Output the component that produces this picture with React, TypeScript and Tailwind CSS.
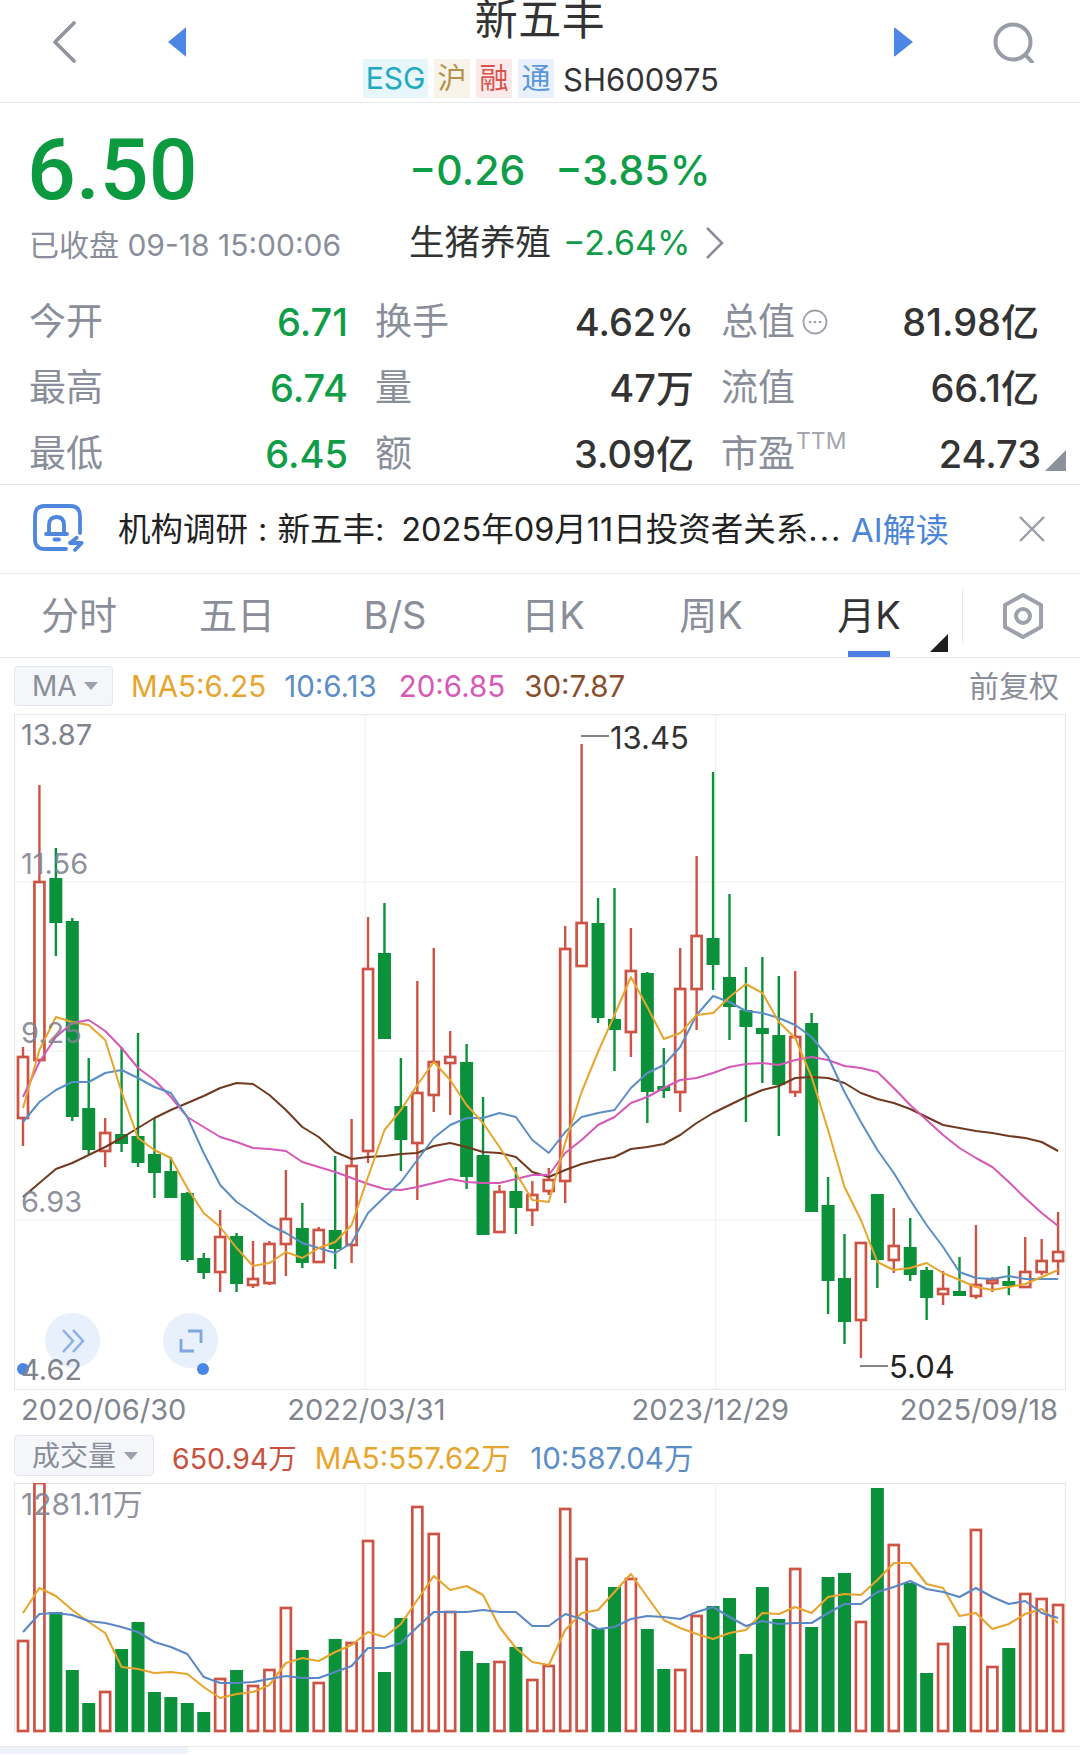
const FONT = "[font-family:Inter,'Noto_Sans_CJK_SC',sans-serif]";

type C = [number, number, number, number, 'r' | 'g'];
const candles: C[] = [
  [1047,1057,1118,1146,'r'],[785,882,1060,1062,'r'],[848,878,923,956,'g'],[918,921,1117,1121,'g'],
  [1058,1108,1150,1154,'g'],[1118,1133,1151,1167,'r'],[1047,1134,1144,1152,'g'],[1033,1136,1163,1167,'g'],
  [1118,1154,1173,1198,'g'],[1157,1171,1198,1198,'g'],[1192,1193,1260,1262,'g'],[1253,1258,1273,1279,'g'],
  [1210,1237,1272,1292,'r'],[1233,1236,1284,1292,'g'],[1241,1279,1285,1288,'r'],[1241,1244,1283,1285,'r'],
  [1170,1219,1244,1276,'r'],[1203,1228,1263,1268,'g'],[1227,1230,1262,1262,'r'],[1156,1230,1249,1269,'g'],
  [1119,1166,1245,1263,'r'],[917,969,1151,1163,'r'],[903,953,1039,1039,'g'],[1058,1106,1140,1171,'g'],
  [981,1093,1143,1200,'r'],[948,1062,1095,1112,'r'],[1031,1057,1063,1115,'r'],[1044,1062,1177,1189,'g'],
  [1097,1155,1235,1235,'g'],[1185,1192,1232,1232,'r'],[1167,1191,1208,1234,'g'],[1181,1195,1210,1226,'r'],
  [1168,1180,1191,1195,'r'],[926,949,1181,1203,'r'],[744,923,966,966,'r'],[898,923,1018,1023,'g'],
  [888,1019,1030,1071,'g'],[928,971,1032,1057,'r'],[972,973,1092,1123,'g'],[1048,1086,1091,1098,'g'],
  [948,989,1092,1112,'r'],[856,936,989,1030,'r'],[772,938,965,990,'g'],[894,977,1007,1040,'g'],
  [967,1010,1027,1122,'g'],[957,1028,1034,1083,'g'],[976,1035,1085,1136,'g'],[971,1037,1092,1097,'r'],
  [1013,1023,1212,1212,'g'],[1177,1205,1281,1314,'g'],[1234,1278,1322,1344,'g'],[1243,1243,1320,1358,'r'],
  [1194,1194,1260,1288,'g'],[1208,1246,1260,1273,'r'],[1218,1247,1275,1281,'g'],[1267,1270,1298,1320,'g'],
  [1271,1289,1294,1305,'r'],[1257,1291,1296,1296,'g'],[1225,1285,1296,1299,'r'],[1277,1280,1283,1292,'r'],
  [1266,1281,1286,1295,'g'],[1237,1272,1287,1287,'r'],[1239,1261,1272,1275,'r'],[1212,1252,1261,1275,'r'],
];
const ma5 = [1108,1050,1017,1022,1025,1040,1092,1138,1150,1158,1188,1213,1227,1248,1266,1263,1252,1258,1248,1242,1225,1177,1130,1110,1085,1062,1080,1105,1123,1147,1173,1200,1202,1143,1092,1052,1015,977,1007,1039,1033,1015,1013,997,984,993,1022,1038,1077,1130,1187,1220,1262,1270,1268,1263,1273,1280,1287,1290,1287,1284,1277,1270];
const ma10 = [1122,1102,1090,1082,1082,1073,1070,1078,1087,1093,1117,1153,1185,1202,1213,1225,1233,1243,1248,1253,1243,1213,1197,1182,1160,1138,1125,1118,1118,1113,1117,1140,1153,1132,1117,1113,1110,1088,1073,1065,1047,1015,996,1002,1011,1013,1018,1025,1037,1057,1092,1122,1150,1173,1200,1225,1247,1272,1278,1279,1276,1279,1279,1279];
const ma20 = [1097,1062,1037,1023,1020,1031,1048,1068,1080,1097,1117,1127,1137,1142,1148,1149,1151,1162,1167,1172,1178,1184,1189,1190,1187,1183,1179,1182,1183,1183,1179,1175,1175,1153,1140,1125,1117,1103,1097,1088,1080,1078,1073,1067,1064,1063,1065,1060,1057,1060,1066,1068,1072,1088,1105,1120,1135,1148,1158,1167,1182,1198,1213,1226];
const ma30 = [1197,1183,1169,1163,1155,1147,1138,1128,1118,1110,1103,1096,1088,1083,1084,1095,1110,1127,1137,1152,1159,1157,1156,1154,1153,1146,1143,1147,1152,1153,1157,1172,1177,1170,1164,1160,1157,1149,1147,1144,1135,1123,1113,1105,1097,1090,1086,1078,1077,1078,1083,1093,1099,1103,1109,1117,1125,1128,1131,1133,1136,1138,1142,1151];
const vol = [1641,1483,1612,1670,1703,1692,1649,1622,1692,1697,1703,1712,1679,1670,1686,1670,1608,1650,1683,1639,1643,1541,1672,1618,1507,1534,1612,1651,1663,1662,1647,1680,1666,1509,1559,1629,1587,1579,1629,1669,1670,1616,1606,1598,1654,1587,1619,1569,1627,1577,1573,1622,1488,1545,1583,1673,1644,1626,1530,1667,1648,1594,1599,1605];
const vma5 = [1613,1588,1596,1610,1622,1633,1667,1669,1673,1672,1674,1687,1698,1694,1692,1685,1663,1658,1661,1652,1645,1632,1637,1624,1600,1576,1590,1586,1595,1627,1648,1662,1665,1630,1613,1610,1592,1574,1597,1620,1628,1634,1639,1633,1630,1613,1614,1607,1613,1597,1594,1595,1580,1563,1563,1584,1588,1616,1613,1629,1624,1614,1609,1623];
const vma10 = [1632,1614,1613,1615,1621,1623,1627,1632,1642,1647,1654,1677,1683,1683,1682,1679,1676,1678,1678,1672,1666,1648,1648,1643,1627,1612,1612,1612,1610,1612,1612,1626,1626,1614,1619,1629,1627,1619,1616,1617,1619,1612,1607,1617,1626,1621,1624,1623,1623,1613,1604,1604,1592,1587,1581,1589,1592,1597,1588,1597,1604,1601,1613,1618];
const volColor: ('r' | 'g')[] = ['r','r','g','g','g','r','g','g','g','g','g','g','r','g','r','r','r','g','r','g','r','r','g','g','r','r','r','g','g','r','g','r','r','r','r','g','g','r','g','g','r','r','g','g','g','g','g','r','g','g','g','r','g','r','g','g','r','g','r','r','g','r','r','r'];

const X = (i: number) => 23 + 16.43 * i;
const RED = '#cd5344';
const GREEN = '#0b9139';
const line = (a: number[]) => a.map((y, i) => `${X(i).toFixed(1)},${y}`).join(' ');

function KChart() {
  return (
    <svg className="absolute inset-0" width="1052" height="676" viewBox="14 714 1052 676">
      <rect x="14.5" y="714.5" width="1051" height="675" fill="#fff" stroke="#e6e8ec" strokeWidth="1.2" />
      {[882, 1051, 1220].map((y) => <line key={y} x1="15" x2="1065" y1={y} y2={y} stroke="#eceef2" strokeWidth="1.2" />)}
      {[365, 715.6].map((x) => <line key={x} x1={x} x2={x} y1="715" y2="1389" stroke="#f0f1f5" strokeWidth="1.2" />)}
      {candles.map(([h, t, b, l, c], i) => {
        const x = X(i);
        const col = c === 'r' ? RED : GREEN;
        return (
          <g key={i}>
            <line x1={x} x2={x} y1={h} y2={t} stroke={col} strokeWidth="2.4" />
            <line x1={x} x2={x} y1={b} y2={l} stroke={col} strokeWidth="2.4" />
            {c === 'r' ? (
              <rect x={x - 5} y={t} width="10" height={Math.max(b - t, 2)} fill="#fff" stroke={col} strokeWidth="2.7" />
            ) : (
              <rect x={x - 6.5} y={t} width="13" height={Math.max(b - t, 3)} fill={col} />
            )}
          </g>
        );
      })}
      <polyline points={line(ma30)} fill="none" stroke="#6f3a20" strokeWidth="2" strokeLinejoin="round" />
      <polyline points={line(ma20)} fill="none" stroke="#d658b7" strokeWidth="2" strokeLinejoin="round" />
      <polyline points={line(ma10)} fill="none" stroke="#5b8ec6" strokeWidth="2" strokeLinejoin="round" />
      <polyline points={line(ma5)} fill="none" stroke="#e7a52e" strokeWidth="2" strokeLinejoin="round" />
      <line x1="581" x2="609" y1="736" y2="736" stroke="#333" strokeWidth="1.2" />
      <line x1="860" x2="888" y1="1366" y2="1366" stroke="#333" strokeWidth="1.2" />
    </svg>
  );
}

function VolChart() {
  return (
    <svg className="absolute inset-0" width="1052" height="250" viewBox="14 1483 1052 250">
      <path d="M14.5 1733 V1483.5 H1065.5 V1733" fill="#fff" stroke="#e6e8ec" strokeWidth="1.2" />
      {[365, 715.6].map((x) => <line key={x} x1={x} x2={x} y1="1484" y2="1732" stroke="#f0f1f5" strokeWidth="1.2" />)}
      {vol.map((y, i) => {
        const x = X(i);
        return volColor[i] === 'r' ? (
          <rect key={i} x={x - 5} y={y} width="10" height={1731 - y} fill="#fff" stroke={RED} strokeWidth="2.7" />
        ) : (
          <rect key={i} x={x - 6.5} y={y} width="13" height={1732.2 - y} fill={GREEN} />
        );
      })}
      <polyline points={line(vma5)} fill="none" stroke="#e7a52e" strokeWidth="2.1" strokeLinejoin="round" />
      <polyline points={line(vma10)} fill="none" stroke="#5b87c6" strokeWidth="2.1" strokeLinejoin="round" />
    </svg>
  );
}

function Stat({ label, value, vc, extra, w = 'w-[319px]' }: { label: string; value: string; vc: string; extra?: React.ReactNode; w?: string }) {
  return (
    <div className={`flex items-center justify-between ${w}`}>
      <div className="flex items-center text-[37px] leading-[44px] text-[#8a8e9a]">{label}{extra}</div>
      <div className={`text-[38px] leading-[44px] font-medium ${vc}`}>{value}</div>
    </div>
  );
}

export default function App() {
  return (
    <div className={`${FONT} relative h-[1755px] w-[1080px] overflow-hidden bg-white`}>
      {/* header */}
      <div className="flex h-[103px] items-start border-b border-[#e8e8e8] pr-[44px] pl-[52px]">
        <div className="mt-[21px] flex items-center gap-[91px]">
          <svg width="24" height="42" viewBox="0 0 24 42"><polyline points="22,2 3,21 22,40" fill="none" stroke="#8f939d" strokeWidth="3.6" strokeLinecap="round" strokeLinejoin="round" /></svg>
          <svg width="20" height="30" viewBox="0 0 20 30"><path d="M19 1 V29 Q19 30 17.500 28.500 L1 15 L17.500 1.500 Q19 0 19 1 Z" fill="#4e86e6" /></svg>
        </div>
        <div className="ml-[176px] flex w-[360px] flex-col">
          <div className="h-[59px] pr-[6px] text-center text-[43px] leading-[38px] tracking-[0.5px] text-[#333]">新五丰</div>
          <div className="flex h-[39px] items-center">
            <span className="flex h-[39px] w-[65px] items-center justify-center bg-[#e6f6fb] text-[30px] text-[#22a8c0]">ESG</span>
            <span className="ml-[6px] flex h-[39px] w-[36px] items-center justify-center bg-[#f8f3e9] text-[29px] text-[#b1924b]">沪</span>
            <span className="ml-[6px] flex h-[39px] w-[36px] items-center justify-center bg-[#fbeaea] text-[29px] text-[#d9534f]">融</span>
            <span className="ml-[6px] flex h-[39px] w-[36px] items-center justify-center bg-[#e9f1fc] text-[29px] text-[#5b95dc]">通</span>
            <span className="mt-[2px] ml-[9px] text-[31px] leading-[39px] text-[#333]">SH600975</span>
          </div>
        </div>
        <div className="mt-[21px] ml-auto flex items-center gap-[78px]">
          <svg width="21" height="30" viewBox="0 0 21 30"><path d="M1 1 V29 Q1 30 3 28.500 L20 15 L3 1.500 Q1 0 1 1 Z" fill="#4e86e6" /></svg>
          <svg width="44" height="42" viewBox="0 0 44 42" fill="none" stroke="#989ca6" strokeWidth="4"><circle cx="21" cy="21" r="17.500" /><path d="M33.500 34 L40 41" strokeLinecap="round" /></svg>
        </div>
      </div>

      {/* price */}
      <div className="flex h-[185px] pl-[29px]">
        <div className="w-[380px]">
          <div className="mt-[31px] -ml-[2px] h-[72px] [font-family:Roboto,sans-serif] text-[86px] leading-[72px] font-medium text-[#0c9a41]">6.50</div>
          <div className="mt-[24px] h-[30px] text-[30px] leading-[30px] text-[#8a8e9a]">已收盘 09-18 15:00:06</div>
        </div>
        <div>
          <div className="mt-[44px] flex h-[46px] gap-[30px] text-[41px] leading-[46px] font-medium text-[#0f9d48]">
            <span>−0.26</span><span>−3.85%</span>
          </div>
          <div className="mt-[30px] flex h-[40px] items-center leading-[40px]">
            <span className="text-[35.500px] text-[#333]">生猪养殖</span>
            <span className="ml-[12px] text-[34px] text-[#0f9d48]">−2.64%</span>
            <svg className="ml-[14px]" width="21" height="32" viewBox="0 0 21 32"><polyline points="3,1 18,16 3,31" fill="none" stroke="#8a8e9a" strokeWidth="2.600" /></svg>
          </div>
        </div>
      </div>

      {/* stats */}
      <div className="relative mb-[-2px] flex flex-col pt-[1px] pl-[29px] [&>div]:h-[66px]">
        <div className="flex items-center gap-[27px]">
          <Stat label="今开" value="6.71" vc="text-[#0f9d48]" />
          <Stat label="换手" value="4.62%" vc="text-[#333]" />
          <Stat label="总值" value="81.98亿" vc="text-[#333]" w="w-[318px]" extra={
            <svg className="ml-[7px]" width="26" height="26" viewBox="0 0 26 26"><circle cx="13" cy="13" r="11.500" fill="none" stroke="#9da1ab" strokeWidth="1.800" /><circle cx="8" cy="13" r="1.300" fill="#9da1ab" /><circle cx="13" cy="13" r="1.300" fill="#9da1ab" /><circle cx="18" cy="13" r="1.300" fill="#9da1ab" /></svg>
          } />
        </div>
        <div className="flex items-center gap-[27px]">
          <Stat label="最高" value="6.74" vc="text-[#0f9d48]" />
          <Stat label="量" value="47万" vc="text-[#333]" />
          <Stat label="流值" value="66.1亿" vc="text-[#333]" w="w-[318px]" />
        </div>
        <div className="-mb-[1px] flex items-center gap-[27px]">
          <Stat label="最低" value="6.45" vc="text-[#0f9d48]" />
          <Stat label="额" value="3.09亿" vc="text-[#333]" />
          <Stat label="市盈" value="24.73" vc="text-[#333]" w="w-[320px]" extra={
            <span className="mt-[-26px] ml-[1px] text-[23px] leading-[24px] text-[#a4a7b0]">TTM</span>
          } />
        </div>
        <svg className="absolute top-[162px] left-[1045px]" width="21" height="21" viewBox="0 0 21 21"><polygon points="21,0 21,21 0,21" fill="#8d919c" /></svg>
      </div>

      {/* banner */}
      <div className="flex h-[90px] items-center border-y border-[#e8e8e8] pl-[32px]">
        <svg width="54" height="52" viewBox="0 0 54 52" fill="none" stroke="#4f87de" strokeWidth="3.800" strokeLinecap="round" strokeLinejoin="round">
          <path d="M34 46 H13 Q3 46 3 36 V13 Q3 3 13 3 H38 Q48 3 48 13 V30" />
          <path d="M17 30 V22 Q17 14 24.500 14 Q32 14 32 22 V30" />
          <path d="M14 31 H35 M22.500 36.500 H27" />
          <path d="M44.700 34.700 L38 40 H49.700 L43 47" />
        </svg>
        <div className="mt-[2px] ml-[32px] w-[725px] text-[32.500px] leading-[40px] whitespace-nowrap text-[#222]">机构调研<span className="mx-[10px]">:</span>新五丰:<span className="ml-[17px]">2025年09月11日投资者关系</span><span className="tracking-[2px]">...</span></div>
        <div className="mt-[2px] ml-[8px] text-[33px] leading-[40px] whitespace-nowrap text-[#4a85d9]">AI解读</div>
        <svg className="ml-[70px]" width="26" height="26" viewBox="0 0 26 26"><path d="M1 1 L25 25 M25 1 L1 25" stroke="#9a9ea8" strokeWidth="2.400" /></svg>
      </div>

      {/* tabs */}
      <div className="flex h-[84px] items-start border-b border-[#e8e8e8]">
        <div className="grid h-[83px] w-[948px] grid-cols-6 text-[38px] text-[#8a8e9a]">
          {['分时', '五日', 'B/S', '日K', '周K'].map((t) => (
            <div key={t} className="flex items-center justify-center pb-[2px] leading-[80px]">{t}</div>
          ))}
          <div className="relative flex items-center justify-center pb-[2px] leading-[80px] text-[#333]">
            月K
            <div className="absolute bottom-0 left-[58px] h-[6px] w-[42px] bg-[#4a80e0]" />
            <svg className="absolute top-[60px] left-[140px]" width="18" height="18" viewBox="0 0 18 18"><polygon points="18,0 18,18 0,18" fill="#1f1f1f" /></svg>
          </div>
        </div>
        <div className="mt-[15px] ml-[14px] h-[54px] w-[1px] bg-[#e8e8e8]" />
        <svg className="mt-[19px] ml-[39px]" width="42" height="46" viewBox="0 0 42 46" fill="none" stroke="#9da1ab" strokeWidth="4">
          <polygon points="21,2 39,12 39,34 21,44 3,34 3,12" strokeLinejoin="round" />
          <circle cx="21" cy="23" r="7" />
        </svg>
      </div>

      {/* MA row */}
      <div className="flex h-[56px] items-center pr-[21px] pl-[14px] text-[29.500px]">
        <div className="flex h-[40px] w-[99px] items-center gap-[7px] rounded-[4px] border border-[#e4e6ee] bg-[#f5f6fa] pl-[17px] text-[28px] text-[#8a8e9a]">
          MA
          <svg width="14" height="8" viewBox="0 0 14 8"><polygon points="0,0 14,0 7,8" fill="#9da1ab" /></svg>
        </div>
        <span className="ml-[18px] text-[#e7a52e]">MA5:6.25</span>
        <span className="ml-[18px] text-[#5b8ec6]">10:6.13</span>
        <span className="ml-[22px] text-[#d658b7]">20:6.85</span>
        <span className="ml-[19px] text-[#8a4d2a]">30:7.87</span>
        <span className="ml-auto text-[30px] text-[#8a8e9a]">前复权</span>
      </div>

      {/* K chart */}
      <div className="relative mx-[14px] h-[675px]">
        <KChart />
        <span className="absolute top-[3px] left-[7px] text-[29px] leading-[36px] text-[#7f838e]">13.87</span>
        <span className="absolute top-[132px] left-[7px] text-[29px] leading-[36px] text-[#7f838e]/90">11.56</span>
        <span className="absolute top-[301px] left-[7px] text-[29px] leading-[36px] text-[#7f838e]/90">9.25</span>
        <span className="absolute top-[470px] left-[7px] text-[29px] leading-[36px] text-[#7f838e]/90">6.93</span>
        <span className="absolute top-[6px] left-[596px] text-[31px] leading-[36px] text-[#333]">13.45</span>
        <span className="absolute top-[635px] left-[875px] text-[31px] leading-[36px] text-[#222]">5.04</span>
        <div className="absolute top-[599px] left-[31px] flex h-[55px] w-[55px] items-center justify-center rounded-full bg-[#e8f0fb]">
          <svg width="26" height="24" viewBox="0 0 26 24" fill="none" stroke="#8fb0e6" strokeWidth="2.600"><polyline points="3,1 13,12 3,23" /><polyline points="13,1 23,12 13,23" /></svg>
        </div>
        <div className="absolute top-[599px] left-[149px] flex h-[55px] w-[55px] items-center justify-center rounded-full bg-[#e8f0fb]">
          <svg width="24" height="24" viewBox="0 0 24 24" fill="none" stroke="#7fa6e2" strokeWidth="2.800"><polyline points="9,2 22,2 22,14" /><polyline points="2,10 2,22 15,22" /></svg>
        </div>
        <div className="absolute top-[649px] left-[3px] h-[12px] w-[12px] rounded-full bg-[#4a86e8]" />
        <div className="absolute top-[649px] left-[183px] h-[12px] w-[12px] rounded-full bg-[#4a86e8]" />
        <span className="absolute top-[638px] left-[7px] text-[29px] leading-[36px] text-[#7f838e]">4.62</span>
      </div>

      {/* dates */}
      <div className="flex h-[43px] items-start pt-[2px] pr-[22px] pl-[21px] text-[29px] leading-[38px] text-[#80858f]">
        <span className="w-[267px]">2020/06/30</span>
        <span className="w-[345px]">2022/03/31</span>
        <span className="w-[269px]">2023/12/29</span>
        <span>2025/09/18</span>
      </div>

      {/* volume row */}
      <div className="flex h-[51px] items-start pl-[14px] text-[29.500px]">
        <div className="mt-[3px] flex h-[41px] w-[140px] items-center gap-[8px] rounded-[4px] border border-[#e4e6ee] bg-[#f5f6fa] pl-[17px] text-[28px] text-[#8a8e9a]">
          成交量
          <svg width="14" height="8" viewBox="0 0 14 8"><polygon points="0,0 14,0 7,8" fill="#9da1ab" /></svg>
        </div>
        <span className="mt-[6px] ml-[18px] text-[28.500px] leading-[41px] text-[#c9503f]">650.94万</span>
        <span className="mt-[6px] ml-[18px] leading-[41px] text-[#e7a52e]">MA5:557.62万</span>
        <span className="mt-[6px] ml-[19.500px] leading-[41px] text-[#5b8ec6]">10:587.04万</span>
      </div>

      {/* volume chart */}
      <div className="relative mx-[14px] h-[250px]">
        <VolChart />
        <span className="absolute top-[3px] left-[7px] text-[30px] leading-[36px] text-[#7f838e]/90">1281.11万</span>
      </div>

      {/* bottom */}
      <div className="mt-[13px] h-[7px] border-t border-[#e8e8e8]">
        <div className="h-[7px] w-[188px] bg-[#eef3fb]" />
      </div>
    </div>
  );
}
